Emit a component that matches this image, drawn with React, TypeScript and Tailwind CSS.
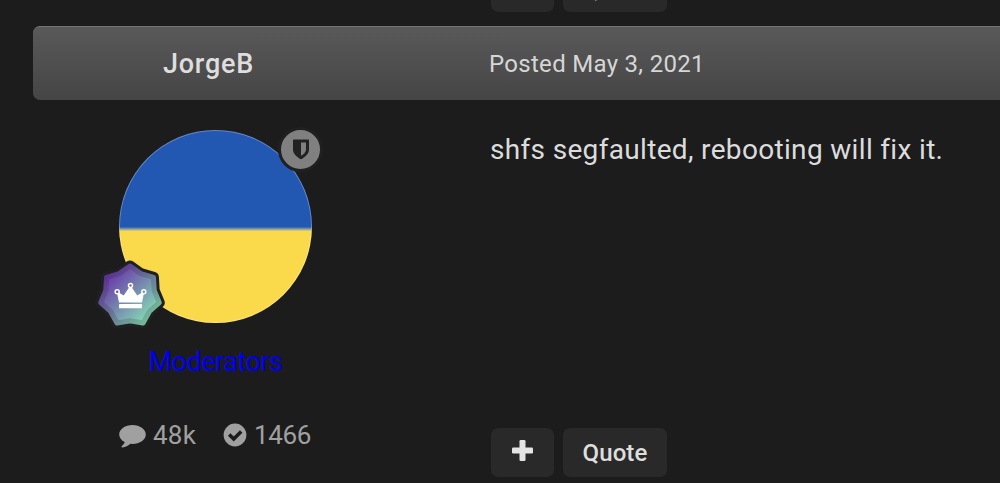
/* Forum post — author panel on the left, post body on the right */

const stats = [
  { label: "48k", icon: <CommentIcon />, text: "tracking-[0.2px]" },
  { label: "1466", icon: <CheckIcon />, text: "tracking-[-0.4px]" },
];

// Seven pointed badge outline, centred on 0,0
const starPoints = Array.from({ length: 14 }, (_, i) => {
  const radius = i % 2 === 0 ? 30 : 24.8;
  const angle = (i * Math.PI) / 7;
  return `${(radius * Math.sin(angle)).toFixed(2)},${(-radius * Math.cos(angle)).toFixed(2)}`;
}).join(" ");

function CommentIcon() {
  return (
    <svg viewBox="0 0 27 24" className="-ml-px h-6 w-[27px] translate-y-px fill-[#a0a0a0]">
      <path d="M13.5 1C6.2 1 .2 5.2.2 10.5c0 3.200 2.200 5.900 5.500 7.600-.5 1.800-1.700 3-3 4.100-.6.500-.2 1.300.6 1.200 3.300-.3 6-1.700 8.200-3.600l2 .1c7.300 0 13.300-4.200 13.300-9.400S20.800 1 13.500 1z" />
    </svg>
  );
}

function CheckIcon() {
  return (
    <svg viewBox="0 0 24 24" className="size-6">
      <circle cx="12" cy="12" r="11.4" className="fill-[#a0a0a0]" />
      <path d="M6.200 11.500l4.500 4.500 7.500-7.500" fill="none" strokeWidth="3.500" className="stroke-[#1c1c1c]" />
    </svg>
  );
}

function RankBadge() {
  return (
    <svg viewBox="-36 -36 72 72" className="absolute top-[130px] left-[-25px] size-[72px]">
      <defs>
        <linearGradient id="rank" x1="0.1" y1="0.1" x2="0.9" y2="0.9">
          <stop offset="0.050" stopColor="#6835a8" />
          <stop offset="0.950" stopColor="#84d8b4" />
        </linearGradient>
      </defs>
      <polygon points={starPoints} strokeWidth="11" strokeLinejoin="round" className="fill-[#202020] stroke-[#202020]" />
      <polygon points={starPoints} fill="url(#rank)" stroke="url(#rank)" strokeWidth="5" strokeLinejoin="round" />
      <polygon points={starPoints} fill="none" stroke="#202020" strokeOpacity="0.180" strokeWidth="5" strokeLinejoin="round" />
      <g className="fill-white">
        <path d="M-11 6.500l-2.300-11.200 7 4.200L.5-10.500l6.800 10 7-4.200L12 6.500z" />
        <rect x="-11" y="8" width="23" height="4.200" rx="0.500" />
      </g>
      <g fill="none" strokeWidth="1.500" className="stroke-white">
        <circle cx="0.5" cy="-10.500" r="2" className="fill-[#6f69ae]" />
        <circle cx="-12.800" cy="-4.200" r="2" className="fill-[#6c50ac]" />
        <circle cx="13.800" cy="-4.200" r="2" className="fill-[#7099b2]" />
      </g>
    </svg>
  );
}

function ModeratorBadge() {
  return (
    <div className="absolute top-[-3px] left-[159px] flex size-[45px] items-center justify-center rounded-full border-[3px] border-[#202020] bg-[#808080]">
      <svg viewBox="0 0 18 21" className="h-[21px] w-[18px]">
        <path fillRule="evenodd" className="fill-[#222]" d="M1.700.5h14.600q.700 0 .7.700v9.300c0 4-3.500 7.500-8 9.800-4.500-2.300-8-5.800-8-9.800V1.200q0-.7.700-.7zM9 3.500v13.300c3-1.700 5-3.800 5-6.300v-7z" />
      </svg>
    </div>
  );
}

function PostActions({ className = "" }: { className?: string }) {
  return (
    <div className="flex gap-[9px]">
      <button className="flex h-[49px] w-[63px] items-center justify-center rounded-[7px] bg-[#292929]">
        <svg viewBox="0 0 21 21" className="mb-1 size-[21px] fill-[#e4e4e4]">
          <rect x="0" y="7.500" width="21" height="6" rx="1.300" />
          <rect x="7.500" y="0" width="6" height="21" rx="1.300" />
        </svg>
      </button>
      <button className={`h-[49px] w-[104px] rounded-[7px] bg-[#292929] text-2xl font-medium tracking-[0.1px] text-[#dedede] ${className}`}>
        Quote
      </button>
    </div>
  );
}

export default function App() {
  return (
    <div className="flex h-[483px] w-[1000px] flex-col overflow-hidden bg-[#1c1c1c] font-['Roboto',sans-serif]">
      {/* Tail of the previous post */}
      <div className="flex h-[26px] shrink-0 flex-col justify-end overflow-hidden pb-[14px] pl-[491px]">
        <PostActions className="pt-1" />
      </div>

      <header className="ml-[33px] flex h-[74px] shrink-0 items-center rounded-l-[7px] border-t border-[#747474] bg-linear-to-b from-[#595959] to-[#454545]">
        <h3 className="w-[351px] pt-0.5 text-center text-[27px] font-medium tracking-[0.8px] text-[#dedede]">JorgeB</h3>
        <p className="ml-[105px] text-2xl tracking-[0.3px] text-[#d6d6d6]">Posted May 3, 2021</p>
      </header>

      <div className="flex flex-1">
        <aside className="flex w-[431px] flex-col items-center">
          <div className="relative mt-[30px] size-[193px]">
            <div className="size-full rounded-full border border-white/30 bg-linear-to-b from-[#2257b2] from-[50.200%] to-[#fad94b] to-[52.500%] bg-origin-border" />
            <ModeratorBadge />
            <RankBadge />
          </div>
          <p className="mt-5 text-[27px] leading-[38px] tracking-[-0.5px] text-[#0000ee]">Moderators</p>
          <ul className="mt-[35px] flex gap-[27px] text-[26px] leading-[38px] text-[#a0a0a0]">
            {stats.map((stat) => (
              <li key={stat.label} className="flex items-center gap-[7px]">
                {stat.icon}
                <span className={stat.text}>{stat.label}</span>
              </li>
            ))}
          </ul>
        </aside>

        <article className="flex flex-1 flex-col justify-between pt-[31px] pb-[6px] pl-[59px]">
          <p className="text-[28px] leading-[38px] tracking-[0.330px] whitespace-nowrap text-[#dcdcdc]">
            shfs segfaulted, rebooting will fix it.
          </p>
          <div className="pl-px">
            <PostActions />
          </div>
        </article>
      </div>
    </div>
  );
}
